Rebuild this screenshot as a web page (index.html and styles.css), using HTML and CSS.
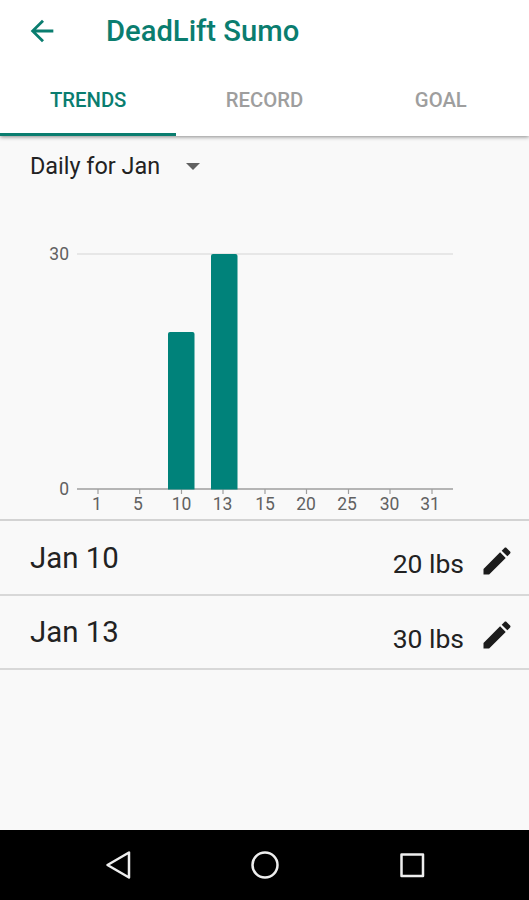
FILE: index.html
```html
<!DOCTYPE html>
<html lang="en">
<head>
  <meta charset="UTF-8" />
  <meta name="viewport" content="width=device-width, initial-scale=1.0"/>
  <title>DeadLift Sumo</title>
  <link rel="stylesheet" href="styles.css">
</head>
<body>

  <header class="app-bar">
    <div class="title-row">
      <svg class="back" viewBox="0 0 24 24"><path d="M20 11H7.83l5.59-5.59L12 4l-8 8 8 8 1.41-1.41L7.83 13H20v-2z"/></svg>
      <h1>DeadLift Sumo</h1>
    </div>
    <nav class="tabs">
      <a class="tab active">TRENDS</a>
      <a class="tab">RECORD</a>
      <a class="tab">GOAL</a>
    </nav>
  </header>

  <main>
    <div class="range">
      <span class="range-label">Daily for Jan</span>
      <svg class="caret" viewBox="0 0 14 7"><path d="M0 0h14L7 7z"/></svg>
    </div>

    <svg class="chart" viewBox="0 0 529 325">
      <path class="grid" d="M77 60H453"/>
      <path class="axis" d="M77 295H453"/>
      <path class="ticks" d="M98 295v5M139.700 295v5M181.500 295v5M223 295v5M265 295v5M306.500 295v5M348.500 295v5M390 295v5M432 295v5"/>
      <path class="bar" d="M168 295.500V140q0-2 2-2h22.500q2 0 2 2V295.500z"/>
      <path class="bar" d="M211 295.500V62q0-2 2-2h22.500q2 0 2 2V295.500z"/>
      <g class="y-labels">
        <text x="69" y="65.500">30</text>
        <text x="69" y="301">0</text>
      </g>
      <g class="x-labels">
        <text x="97" y="315.500">1</text>
        <text x="138" y="315.500">5</text>
        <text x="181.500" y="315.500">10</text>
        <text x="222.500" y="315.500">13</text>
        <text x="265" y="315.500">15</text>
        <text x="306" y="315.500">20</text>
        <text x="347" y="315.500">25</text>
        <text x="389.500" y="315.500">30</text>
        <text x="430" y="315.500">31</text>
      </g>
    </svg>

    <ul class="entries">
      <li class="entry">
        <span class="date">Jan 10</span>
        <span class="weight">20 lbs</span>
        <svg class="edit" viewBox="0 0 24 24"><path d="M3 17.250V21h3.750L17.810 9.940l-3.750-3.750L3 17.250zM20.710 7.040c.39-.39.39-1.020 0-1.410l-2.340-2.340c-.39-.39-1.020-.39-1.410 0l-1.830 1.830 3.750 3.750 1.830-1.830z"/></svg>
      </li>
      <li class="entry">
        <span class="date">Jan 13</span>
        <span class="weight">30 lbs</span>
        <svg class="edit" viewBox="0 0 24 24"><path d="M3 17.250V21h3.750L17.810 9.940l-3.750-3.750L3 17.250zM20.710 7.040c.39-.39.39-1.020 0-1.410l-2.340-2.340c-.39-.39-1.020-.39-1.410 0l-1.830 1.830 3.750 3.750 1.830-1.830z"/></svg>
      </li>
    </ul>
  </main>

  <footer class="nav-bar">
    <svg viewBox="0 0 30 30"><path d="M4.500 15L26 2.500v25z"/></svg>
    <svg viewBox="0 0 30 30"><circle cx="15" cy="15" r="12.500"/></svg>
    <svg viewBox="0 0 30 30"><path d="M4.500 4.500h21.500v21.500H4.500z"/></svg>
  </footer>

</body>
</html>
```

FILE: styles.css
```css
* {
  box-sizing: border-box;
}

body {
  margin: 0;
  height: 900px;
  display: flex;
  flex-direction: column;
  font-family: Roboto, sans-serif;
  background: #f9f9f9;
  color: #222;
  overflow: hidden;
}

.app-bar {
  height: 136px;
  background: #fff;
  box-shadow: 0 1px 4px rgba(0, 0, 0, 0.45);
}

.title-row {
  display: flex;
  align-items: center;
  height: 62px;
  padding-left: 25px;
}

.back {
  width: 34px;
  height: 34px;
  fill: #0a7d6f;
}

h1 {
  margin: 0 0 0 47px;
  font-size: 29.200px;
  font-weight: 500;
  color: #0a7d6f;
}

.tabs {
  display: grid;
  grid-template-columns: repeat(3, 1fr);
  height: 74px;
}

.tab {
  display: flex;
  align-items: center;
  justify-content: center;
  padding-top: 5px;
  font-size: 20.300px;
  font-weight: 500;
  color: #9e9e9e;
  border-bottom: 3px solid transparent;
}

.tab.active {
  color: #0a7d6f;
  border-bottom-color: #0a7d6f;
}

main {
  flex: 1;
}

.range {
  display: flex;
  align-items: center;
  height: 58px;
  padding: 2px 0 0 30px;
}

.range-label {
  font-size: 23.400px;
}

.caret {
  width: 14px;
  height: 7px;
  margin-left: 26px;
  fill: #616161;
}

.chart {
  display: block;
  width: 529px;
  height: 325px;
}

.grid {
  stroke: #e0e0e0;
  stroke-width: 1.500;
}

.axis {
  stroke: #9e9e9e;
  stroke-width: 1.500;
}

.ticks {
  stroke: #9e9e9e;
  stroke-width: 1.200;
}

.bar {
  fill: #00827a;
}

.y-labels, .x-labels {
  font-size: 17.500px;
  fill: #616161;
}

.y-labels {
  text-anchor: end;
}

.x-labels {
  text-anchor: middle;
}

.entries {
  list-style: none;
  margin: 0;
  padding: 0;
  border-top: 2px solid #d3d3d3;
}

.entry {
  display: flex;
  align-items: center;
  height: 75px;
  padding: 0 14px 0 30px;
  border-bottom: 2px solid #d8d8d8;
}

.entry:last-child {
  height: 74px;
}

.date {
  flex: 1;
  font-size: 29.400px;
}

.weight {
  padding-top: 12px;
  font-size: 26.500px;
}

.edit {
  width: 36px;
  height: 36px;
  margin: 6px 0 0 15px;
  fill: #1c1c1c;
}

.nav-bar {
  display: flex;
  justify-content: space-between;
  align-items: center;
  height: 70px;
  padding: 0 102px 0 103px;
  background: #000;
}

.nav-bar svg {
  width: 30px;
  height: 30px;
  fill: none;
  stroke: #eee;
  stroke-width: 2.500;
  stroke-linejoin: round;
}
```
